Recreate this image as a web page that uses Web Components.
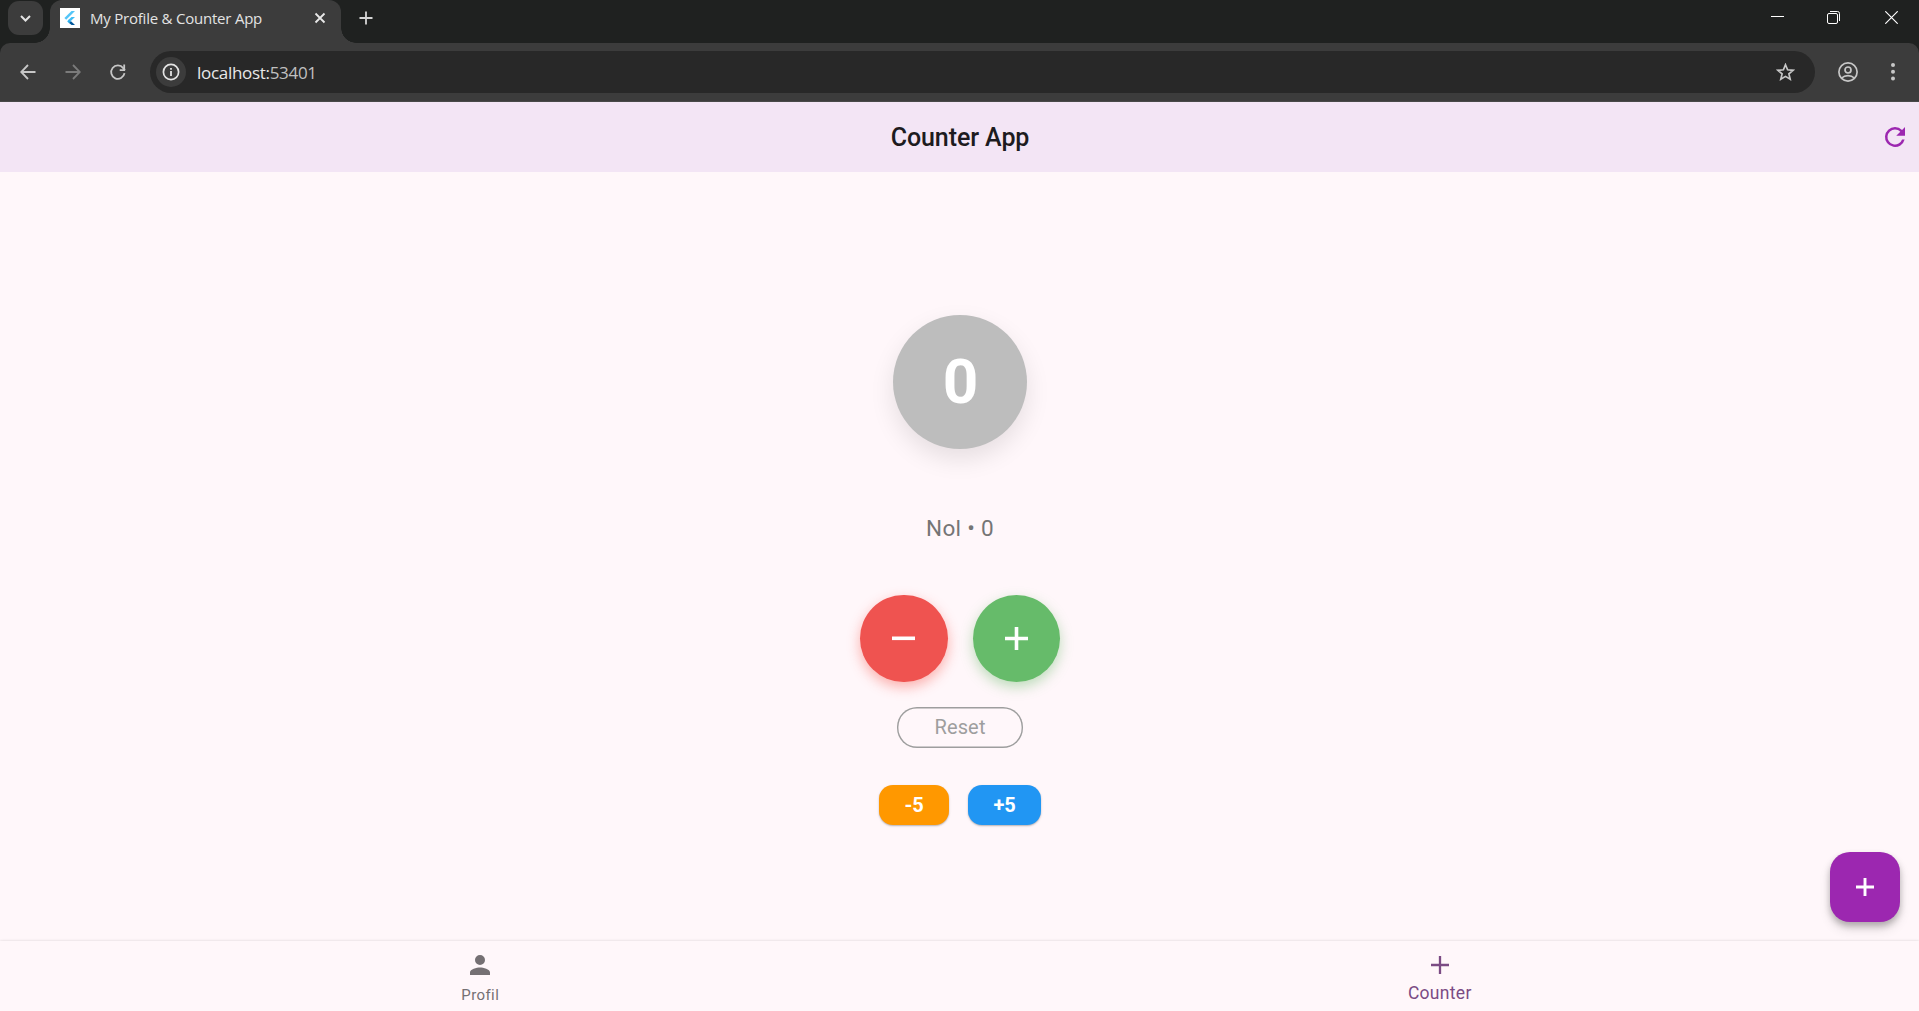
<!DOCTYPE html>
<html lang="en"><head><meta charset="utf-8"><title>My Profile &amp; Counter App</title>
<style>html,body{margin:0;height:100%;overflow:hidden}body{font-family:Roboto,sans-serif}</style></head>
<body><desktop-browser></desktop-browser>
<script>
function define(name, css, html){
  const t=document.createElement('template');
  t.innerHTML='<style>*{box-sizing:border-box}svg{display:block;flex:none}'+css+'</style>'+html;
  customElements.define(name,class extends HTMLElement{
    constructor(){super();this.attachShadow({mode:'open'}).append(t.content.cloneNode(true));}
  });
}
define('tab-strip',`
:host{display:flex;height:43px;background:#1f2120;font-family:"Open Sans",sans-serif;color:#e3e3e3;position:relative}
.search{width:35px;height:34px;margin:1px 0 0 8px;border-radius:11px;background:#3c3c3c;display:grid;place-items:center}
.tab{position:relative;margin-left:7px;width:291px;height:43px;background:#3c3c3c;border-radius:12px 12px 0 0;display:flex;align-items:flex-start;padding:8px 0 0 10px}
.tab:before,.tab:after{content:"";position:absolute;bottom:0;width:15px;height:15px}
.tab:before{left:-15px;background:radial-gradient(circle at 0 0,transparent 14.5px,#3c3c3c 15px)}
.tab:after{right:-15px;background:radial-gradient(circle at 100% 0,transparent 14.5px,#3c3c3c 15px)}
.title{font-size:15px;line-height:20px;margin-left:10px;letter-spacing:-.22px;white-space:nowrap;width:224px}
.new{margin:11px 0 0 18px}.spacer{flex:1}.win{display:flex;padding-top:11px}
`,`<div class="search"><svg width="13" height="9" viewBox="0 0 13 9"><path d="M2 2l4.5 4.5L11 2" fill="none" stroke="#e3e3e3" stroke-width="2"/></svg></div>
<div class="tab"><svg width="20" height="20" viewBox="0 0 20 20"><path fill="#fff" d="M0 0h20v20H0z"/><path fill="#54c5f8" d="M11.5 3H15L6.2 11.7 4.4 10z"/><path fill="#40bdf5" d="M11.5 9H15l-4.2 4-2.5-1z"/><path fill="#29b0ee" d="M7.2 13.2l1.8-1.8 2 1.8-2 2z"/><path fill="#01579b" d="M9 15.1l2-1.9 4 3.8h-3.4z"/></svg><span class="title">My Profile &amp; Counter App</span>
<svg width="12" height="12" viewBox="0 0 12 12" style="margin-top:4px"><path d="M1.5 1.5l9 9m0-9l-9 9" stroke="#e8e8e8" stroke-width="1.8"/></svg></div>
<svg class="new" width="14" height="14" viewBox="0 0 14 14"><path d="M7 .5v13M.5 7h13" stroke="#d5d5d5" stroke-width="1.8"/></svg><span class="spacer"></span>
<div class="win"><svg width="13" height="13" viewBox="0 0 13 13" style="margin-right:43px"><path d="M0 5.5h13" stroke="#fff"/></svg><svg width="13" height="13" viewBox="0 0 13 13" style="margin-right:45px"><rect x=".5" y="2.5" width="10" height="10" rx="1.5" fill="none" stroke="#fff"/><path d="M3 .5h7.5a2 2 0 0 1 2 2V10" fill="none" stroke="#fff"/></svg><svg width="13" height="13" viewBox="0 0 13 13" style="margin-right:21px"><path d="M.3.3l12.4 12.4m0-12.4L.3 12.7" stroke="#fff" stroke-width="1.15"/></svg></div>`);
define('address-bar',`
:host{display:block;height:59px;background:#1f2120}
.bar{height:100%;display:flex;align-items:center;background:#3c3c3c;border-radius:10px 10px 0 0;border-bottom:1.5px solid #484949;padding:0 21px 0 20px}
.field{margin-left:24px;width:1665px;height:42px;border-radius:21px;background:#282828;display:flex;align-items:center;padding:0 20px 0 6px}
.info{width:30px;height:30px;border-radius:50%;background:#3c3c3c;display:grid;place-items:center}
.url{font:17px/24px "Open Sans",sans-serif;color:#e8e8e8;margin:1px 0 0 11px;flex:1;letter-spacing:-.3px}.url b{font-weight:400;color:#c0c0c0}
`,`<div class="bar"><svg width="16" height="16" viewBox="0 0 16 16"><path d="M8 1L1.2 8 8 15M1.2 8H15.5" fill="none" stroke="#c7c7c7" stroke-width="1.8"/></svg>
<svg width="16" height="16" viewBox="0 0 16 16" style="margin-left:29px"><path d="M8 1l6.8 7L8 15m6.8-7H.5" fill="none" stroke="#7b7b7b" stroke-width="1.8"/></svg>
<svg width="16" height="16" viewBox="0 0 16 16" style="margin:0 0 1px 29px;overflow:visible"><path d="M14.5 9.2A6.7 6.7 0 1 1 13.2 4.1L15 6" fill="none" stroke="#c7c7c7" stroke-width="1.8"/><path d="M9.7 6.1h4.5V.5" fill="none" stroke="#c7c7c7" stroke-width="1.8"/></svg>
<div class="field"><span class="info"><svg width="18" height="18" viewBox="0 0 18 18"><circle cx="9" cy="9" r="7.6" fill="none" stroke="#e3e3e3" stroke-width="1.7"/><path d="M9 8v5M9 5v1.8" stroke="#e3e3e3" stroke-width="1.8"/></svg></span><span class="url">localhost:<b>53401</b></span>
<svg width="19" height="19" viewBox="0 0 19 19"><path d="M9.5 1.7l2.1 5.1 5.5.5-4.2 3.6 1.3 5.4-4.7-2.9-4.7 2.9 1.3-5.4-4.2-3.6 5.5-.5z" fill="none" stroke="#c7c7c7" stroke-width="1.7"/></svg></div>
<svg width="20" height="20" viewBox="0 0 20 20" style="margin-left:23px"><circle cx="10" cy="10" r="9.1" fill="none" stroke="#c7c7c7" stroke-width="1.7"/><circle cx="10" cy="8" r="3" fill="none" stroke="#c7c7c7" stroke-width="1.7"/><path d="M3.7 16c3.2-3.3 9.4-3.3 12.6 0" fill="none" stroke="#c7c7c7" stroke-width="1.7"/></svg>
<svg width="6" height="20" viewBox="0 0 6 20" style="margin-left:32px"><g fill="#c7c7c7"><circle cx="3" cy="3" r="2"/><circle cx="3" cy="9.8" r="2"/><circle cx="3" cy="16.6" r="2"/></g></svg></div>`);
define('app-header',`
:host{height:70px;background:#f3e5f5;display:grid;grid-template-columns:50px 1fr 50px;align-items:center}
h1{grid-column:2;margin:0;padding:2px 0 0 1px;text-align:center;font:500 25px/32px Roboto,sans-serif;letter-spacing:-.08px;color:#1d1b20}
`,`<h1>Counter App</h1><svg width="30" height="30" viewBox="0 0 24 24" style="margin-left:11px"><path fill="#9c27b0" d="M17.65 6.35A7.96 7.96 0 0 0 12 4a8 8 0 1 0 7.73 10h-2.08A6 6 0 1 1 12 6c1.66 0 3.14.69 4.22 1.78L13 11h7V4z"/></svg>`);
define('round-button',`
:host{width:87.5px;height:87.5px;border-radius:50%;display:grid;place-items:center;background:var(--c);box-shadow:0 5px 12.5px var(--s)}
`,`<slot></slot>`);
define('step-button',`
:host{height:40px;border-radius:14px;display:grid;place-items:center;background:var(--c);color:#fff;font:700 20px/28px Roboto,sans-serif;letter-spacing:-.2px;box-sizing:border-box;box-shadow:0 1px 1.5px #0003,0 1px 3px #0000001a}
`,`<slot></slot>`);
define('counter-panel',`
:host{flex:1;min-height:0;display:flex;flex-direction:column;align-items:center;padding:142.5px 0 0 1px;background:#fff7fa;position:relative}
.disc{width:134px;height:134px;border-radius:50%;background:#bdbdbd;color:#fff;display:grid;place-items:center;font:700 62px/80px Roboto,sans-serif;padding:0 0 0 1px;box-shadow:0 10px 25px #0000001a}
.label{margin-top:63px;font-size:22.5px;line-height:32px;letter-spacing:.3px;color:#757575}
.row{display:flex;gap:25px;margin-top:51px}
.reset{width:126px;height:40.5px;margin-top:25px;box-shadow:inset 0 0 0 1.4px #9e9e9e;border-radius:20px;display:grid;place-items:center;color:#9e9e9e;font-size:20px;letter-spacing:.15px}
.steps{display:flex;gap:19px;margin-top:37.5px}
.fab{position:absolute;right:19px;bottom:19.5px;width:70px;height:70px;border-radius:20px;background:#9c27b0;display:grid;place-items:center;box-shadow:0 4px 6px #0000003a,0 7px 12px #0000001f}
`,`<div class="disc">0</div><div class="label">Nol • 0</div>
<div class="row"><round-button style="--c:#ef5350;--s:#f4433666"><svg width="23" height="23" viewBox="0 0 23 23"><path d="M0 11.3h23" stroke="#fff" stroke-width="3.6"/></svg></round-button><round-button style="--c:#66bb6a;--s:#4caf5060"><svg width="23" height="23" viewBox="0 0 23 23"><path d="M0 11.5h23M11.5 0v23" stroke="#fff" stroke-width="3.6"/></svg></round-button></div>
<div class="reset">Reset</div>
<div class="steps"><step-button style="--c:#ff9800;width:70px">-5</step-button><step-button style="--c:#2196f3;width:73px">+5</step-button></div>
<div class="fab"><svg width="18" height="18" viewBox="0 0 18 18"><path d="M0 9h18M9 0v18" stroke="#fff" stroke-width="2.9"/></svg></div>`);
define('nav-item',`
:host{flex:1;display:flex;flex-direction:column;align-items:center;color:var(--c)}
.label{white-space:nowrap}
`,`<slot name="icon"></slot><span class="label"><slot></slot></span>`);
define('bottom-nav',`
:host{height:70px;flex:none;display:flex;background:#fff7fa;box-shadow:0 -.5px 2.5px #00000028;position:relative}
nav-item{font-size:15px;line-height:18px}
`,`<nav-item style="--c:#757073;letter-spacing:.4px;padding:14px 0 0 1px"><svg slot="icon" width="20" height="20" viewBox="4 4 16 16" style="margin-bottom:11px"><path fill="#757073" d="M12 12a4 4 0 1 0 0-8 4 4 0 0 0 0 8zm0 2c-2.67 0-8 1.34-8 4v2h16v-2c0-2.66-5.33-4-8-4z"/></svg>Profil</nav-item>
<nav-item style="--c:#7b4b84;font-size:17.5px;letter-spacing:.3px;padding:15px 0 0 1px"><svg slot="icon" width="18" height="18" viewBox="0 0 18 18" style="margin-bottom:10px"><path d="M0 9h18M9 0v18" stroke="#7b4b84" stroke-width="2.3"/></svg>Counter</nav-item>`);
define('desktop-browser',`
:host{height:100vh;display:flex;flex-direction:column}
tab-strip,address-bar,app-header{flex:none}
`,`<tab-strip></tab-strip><address-bar></address-bar><app-header></app-header><counter-panel></counter-panel><bottom-nav></bottom-nav>`);
</script></body></html>
